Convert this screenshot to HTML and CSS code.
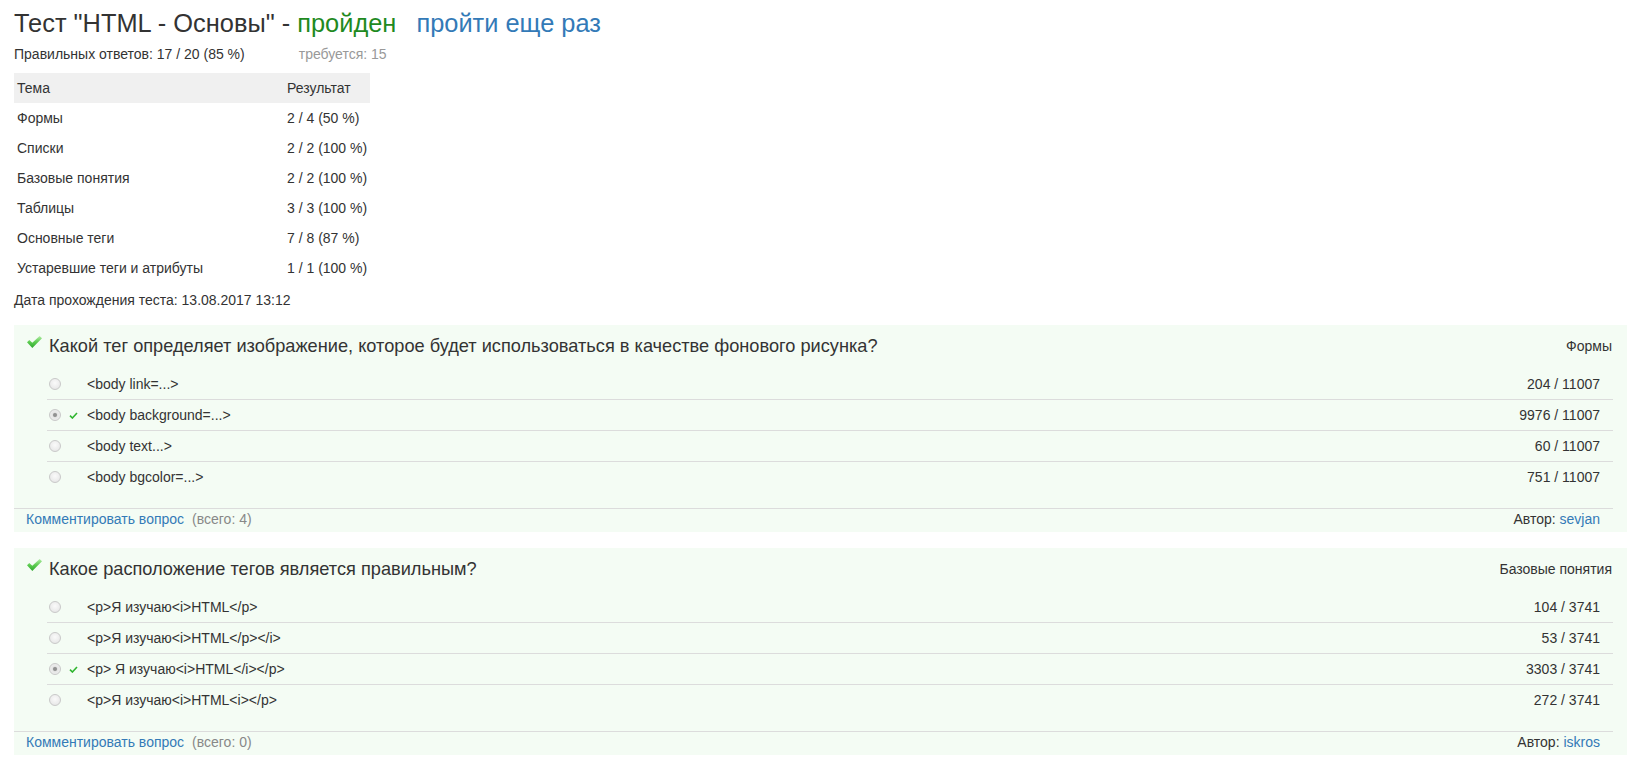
FILE: index.html
```html
<!DOCTYPE html>
<html lang="ru">
<head>
<meta charset="utf-8">
<title>Тест "HTML - Основы"</title>
<link rel="stylesheet" href="styles.css">
</head>
<body>
<h1 class="title">Тест "HTML - Основы" - <span class="passed">пройден</span><a class="retry" href="#">пройти еще раз</a></h1>
<div class="stats">Правильных ответов: 17 / 20 (85 %)<span class="required">требуется: 15</span></div>
<table class="topics">
  <colgroup><col class="col-topic"><col class="col-result"></colgroup>
  <thead><tr><th>Тема</th><th>Результат</th></tr></thead>
  <tbody>
    <tr><td>Формы</td><td>2 / 4 (50 %)</td></tr>
    <tr><td>Списки</td><td>2 / 2 (100 %)</td></tr>
    <tr><td>Базовые понятия</td><td>2 / 2 (100 %)</td></tr>
    <tr><td>Таблицы</td><td>3 / 3 (100 %)</td></tr>
    <tr><td>Основные теги</td><td>7 / 8 (87 %)</td></tr>
    <tr><td>Устаревшие теги и атрибуты</td><td>1 / 1 (100 %)</td></tr>
  </tbody>
</table>
<div class="date">Дата прохождения теста: 13.08.2017 13:12</div>

<div class="question">
  <div class="q-head">
    <div class="q-title">
      <svg class="q-check" width="15" height="12" viewBox="0 0 15 12"><defs><linearGradient id="g1" x1="0" y1="0" x2="0" y2="1"><stop offset="0" stop-color="#b4eca8"/><stop offset="0.5" stop-color="#5ccc50"/><stop offset="1" stop-color="#2ea82e"/></linearGradient></defs><polygon points="0,6.3 2.3,4 5.3,6.8 12.6,0 15,2.3 5.3,12" fill="url(#g1)"/></svg>
      <span class="q-text">Какой тег определяет изображение, которое будет использоваться в качестве фонового рисунка?</span>
    </div>
    <div class="q-cat">Формы</div>
  </div>
  <div class="answers">
    <div class="answer"><span class="radio"></span><span class="mark"></span><span class="a-text">&lt;body link=...&gt;</span><span class="a-count">204 / 11007</span></div>
    <div class="answer"><span class="radio checked"></span><span class="mark"><svg width="9" height="7" viewBox="0 0 9 7"><path d="M1 3.6 L3.4 6 L8 1" fill="none" stroke="#2fb52f" stroke-width="1.6"/></svg></span><span class="a-text">&lt;body background=...&gt;</span><span class="a-count">9976 / 11007</span></div>
    <div class="answer"><span class="radio"></span><span class="mark"></span><span class="a-text">&lt;body text...&gt;</span><span class="a-count">60 / 11007</span></div>
    <div class="answer"><span class="radio"></span><span class="mark"></span><span class="a-text">&lt;body bgcolor=...&gt;</span><span class="a-count">751 / 11007</span></div>
  </div>
  <div class="q-foot">
    <div><a href="#">Комментировать вопрос</a><span class="total">(всего: 4)</span></div>
    <div>Автор: <a href="#">sevjan</a></div>
  </div>
</div>

<div class="question">
  <div class="q-head">
    <div class="q-title">
      <svg class="q-check" width="15" height="12" viewBox="0 0 15 12"><defs><linearGradient id="g2" x1="0" y1="0" x2="0" y2="1"><stop offset="0" stop-color="#b4eca8"/><stop offset="0.5" stop-color="#5ccc50"/><stop offset="1" stop-color="#2ea82e"/></linearGradient></defs><polygon points="0,6.3 2.3,4 5.3,6.8 12.6,0 15,2.3 5.3,12" fill="url(#g2)"/></svg>
      <span class="q-text">Какое расположение тегов является правильным?</span>
    </div>
    <div class="q-cat">Базовые понятия</div>
  </div>
  <div class="answers">
    <div class="answer"><span class="radio"></span><span class="mark"></span><span class="a-text">&lt;p&gt;Я изучаю&lt;i&gt;HTML&lt;/p&gt;</span><span class="a-count">104 / 3741</span></div>
    <div class="answer"><span class="radio"></span><span class="mark"></span><span class="a-text">&lt;p&gt;Я изучаю&lt;i&gt;HTML&lt;/p&gt;&lt;/i&gt;</span><span class="a-count">53 / 3741</span></div>
    <div class="answer"><span class="radio checked"></span><span class="mark"><svg width="9" height="7" viewBox="0 0 9 7"><path d="M1 3.6 L3.4 6 L8 1" fill="none" stroke="#2fb52f" stroke-width="1.6"/></svg></span><span class="a-text">&lt;p&gt; Я изучаю&lt;i&gt;HTML&lt;/i&gt;&lt;/p&gt;</span><span class="a-count">3303 / 3741</span></div>
    <div class="answer"><span class="radio"></span><span class="mark"></span><span class="a-text">&lt;p&gt;Я изучаю&lt;i&gt;HTML&lt;i&gt;&lt;/p&gt;</span><span class="a-count">272 / 3741</span></div>
  </div>
  <div class="q-foot">
    <div><a href="#">Комментировать вопрос</a><span class="total">(всего: 0)</span></div>
    <div>Автор: <a href="#">iskros</a></div>
  </div>
</div>
</body>
</html>
```

FILE: styles.css
```css
html, body {
  background: #fff;
}
body {
  margin: 0;
  padding: 9px 10px 0 14px;
  font-family: "Liberation Sans", Arial, sans-serif;
  font-size: 14px;
  line-height: 20px;
  color: #333;
}
a {
  color: #337ab7;
  text-decoration: none;
}
.title {
  margin: 0;
  font-size: 25.4px;
  line-height: 28px;
  font-weight: normal;
  color: #333;
}
.passed {
  color: #1f8a1f;
}
.retry {
  margin-left: 20px;
}
.stats {
  margin-top: 7px;
}
.required {
  color: #999;
  margin-left: 54px;
}
.topics {
  margin-top: 9px;
  width: 356px;
  table-layout: fixed;
  border-collapse: collapse;
}
.col-topic {
  width: 270px;
}
.topics th,
.topics td {
  padding: 5px 3px;
  text-align: left;
  font-weight: normal;
  white-space: nowrap;
}
.topics thead th {
  background: #f0f0f0;
}
.date {
  margin-top: 7px;
}
.question {
  margin-top: 15px;
  background: #f4fcf4;
  padding: 10px 14px 3px 0;
}
.question + .question {
  margin-top: 16px;
}
.q-head {
  display: flex;
  justify-content: space-between;
  align-items: center;
  padding-left: 13px;
  padding-right: 1px;
}
.q-title {
  display: flex;
  align-items: flex-start;
}
.q-check {
  margin-top: 1px;
  margin-right: 7px;
  flex: none;
}
.q-text {
  font-size: 18.2px;
  line-height: 22px;
}
.answers {
  margin: 12px 0 0 33px;
}
.answer {
  display: flex;
  align-items: center;
  padding: 5px 13px 5px 2px;
}
.answer + .answer {
  border-top: 1px solid #dcdcdc;
}
.radio {
  flex: none;
  width: 12px;
  height: 12px;
  box-sizing: border-box;
  border-radius: 50%;
  border: 1px solid #c9c9c9;
  background: radial-gradient(circle at 50% 40%, #fafafa 0, #ececec 60%, #dedede 100%);
  margin-right: 8px;
}
.radio.checked {
  background: radial-gradient(circle at 50% 50%, #8a8a8a 0, #9a9a9a 1.6px, #e6e6e6 2.6px, #f2f2f2 100%);
}
.mark {
  flex: none;
  width: 9px;
  height: 7px;
  margin-right: 9px;
  display: flex;
}
.a-text {
  flex: 1;
}
.a-count {
  flex: none;
}
.q-foot {
  margin-top: 16px;
  border-top: 1px solid #dcdcdc;
  display: flex;
  justify-content: space-between;
  padding: 0 13px 0 12px;
}
.total {
  color: #888;
  margin-left: 8px;
}
```
